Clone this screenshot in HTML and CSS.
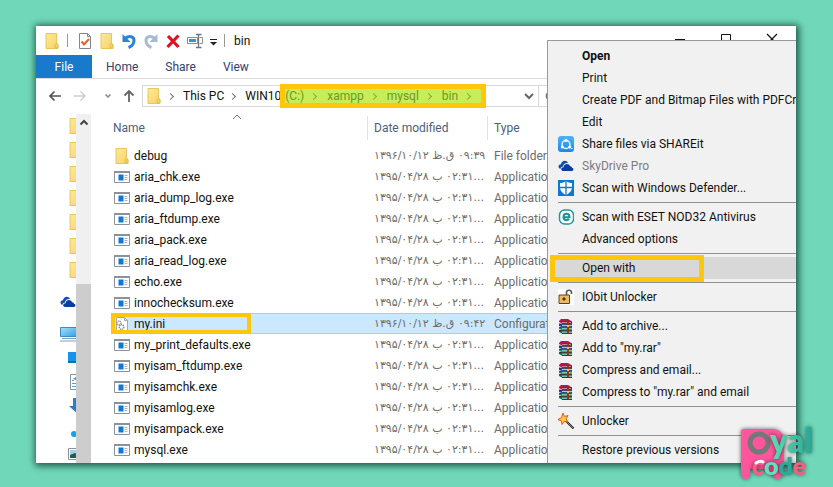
FILE: index.html
```
<!DOCTYPE html>
<html lang="en">
<head>
<meta charset="utf-8">
<title>bin</title>
<link rel="stylesheet" href="styles.css">
</head>
<body>
<svg class="defs" aria-hidden="true">
  <linearGradient id="fold" x1="0" y1="0" x2="1" y2="1"><stop offset="0" stop-color="#ffe99a"/><stop offset="1" stop-color="#f5d266"/></linearGradient>
  <linearGradient id="screen" x1="0" y1="0" x2="1" y2="1"><stop offset="0" stop-color="#a6e3fb"/><stop offset="1" stop-color="#2f9be6"/></linearGradient>
  <linearGradient id="share" x1="0" y1="0" x2="0" y2="1"><stop offset="0" stop-color="#4db4fb"/><stop offset="1" stop-color="#1b86f0"/></linearGradient>
  <symbol id="folder" viewBox="0 0 16 16"><path d="M2 .5h10.500v10l1.500 1v4H2z" fill="url(#fold)" stroke="#e6c24e" stroke-width=".9"/><path d="M11 15V11.500l1.500-1 1.500 1V15z" fill="#f3cf62" stroke="#dcb645" stroke-width=".6"/></symbol>
  <symbol id="exe" viewBox="0 0 16 16"><path d="M.5 2.500h15v11H.5z" fill="#fff" stroke="#8b9299"/><path d="M0 2h16v2H0z" fill="#8b9299"/><path d="M4.500 5.500h5v6h-5z" fill="#0f78d4"/><path d="M10.500 6.500h3M10.500 8.500h3M10.500 10.500h3" stroke="#a9b4be"/></symbol>
  <symbol id="ini" viewBox="0 0 16 16"><path d="M2.500 1.500h8l3 3v10h-11z" fill="#fff" stroke="#a7a7a7"/><path d="M10.500 1.500v3h3" fill="none" stroke="#a7a7a7"/><circle cx="5" cy="7" r="2" fill="none" stroke="#9b9b9b" stroke-width="1.500" stroke-dasharray="1.200 .6"/><circle cx="7.500" cy="11" r="2.300" fill="none" stroke="#8b8b8b" stroke-width="1.500" stroke-dasharray="1.200 .6"/></symbol>
  <symbol id="cloud" viewBox="0 0 16 16"><path d="M1.500 10.500C-.5 9 .7 6 3 6.200 3.500 2.500 8.500 1.500 10 5 6.500 4.500 5 7 5 8.500 3.500 8.500 2.500 9.500 2.500 11z" fill="#0f4fae"/><path d="M5 13C2.500 13 2.700 9.300 5.500 9.300 5.800 5.500 11 4.800 12 8.200c1.800-.2 2 1.300 1.900 1.600C16 10 15.800 13 14 13z" fill="#0a3ea0"/></symbol>
  <symbol id="books" viewBox="0 0 16 16"><path d="M1 3l2-2h7l4 2.500v2H4L1 4z" fill="#b01852"/><path d="M4 3.700h10v2H4z" fill="#6d1034"/><path d="M4 4.600h9" stroke="#e9b8c8" stroke-width=".8"/><path d="M1 5.500l3 1h10v2.500H4L1 8z" fill="#2b3fae"/><path d="M4 7.600h10" stroke="#b9d3f5"/><path d="M1 9l3 1h10v2H4l-3-1z" fill="#138a5f"/><path d="M4 10.800h10" stroke="#a7e1c7"/><path d="M1 12l3 1h10v2.500H4L1 14z" fill="#0b6c52"/><path d="M4 14.200h10" stroke="#a7e1df"/><path d="M1.500 6.200h12.500M1.500 9.400h12.500M1.500 12.500h12.500M4 15.600h10" stroke="#111" stroke-width=".8"/><path d="M8.500 1.500L11 3.500v12H9V4z" fill="#8c3a18"/><path d="M9 7h2v2H9z" fill="#f0c23c"/></symbol>
</svg>

<main class="window">
  <header class="titlebar">
    <button class="tool" aria-label="Window menu"><svg viewBox="0 0 16 16"><use href="#folder"/></svg></button>
    <i class="bar"></i>
    <button class="tool" aria-label="Properties"><svg viewBox="0 0 16 16"><path d="M2.500.5h8l3 3v12h-11z" fill="#fff" stroke="#858585"/><path d="M10.500.5v3h3" fill="none" stroke="#858585"/><path d="M4.500 8.500l2.500 3 5-5.500" fill="none" stroke="#e8602c" stroke-width="2"/></svg></button>
    <button class="tool" aria-label="New folder"><svg viewBox="0 0 16 16"><use href="#folder"/></svg></button>
    <button class="tool" aria-label="Undo"><svg viewBox="0 0 16 16"><path d="M4 5.500C9 1.500 14 4 12.800 9c-.5 2.500-2.500 4.500-5.300 5.500" fill="none" stroke="#2b84d3" stroke-width="3"/><path d="M1.500 1v8h8z" fill="#2b84d3"/></svg></button>
    <button class="tool" aria-label="Redo"><svg viewBox="0 0 16 16"><path d="M12 5.500C7 1.500 2 4 3.200 9c.5 2.500 2.500 4.500 5.300 5.500" fill="none" stroke="#a9b9d3" stroke-width="3"/><path d="M14.500 1v8h-8z" fill="#a9b9d3"/></svg></button>
    <button class="tool" aria-label="Delete"><svg viewBox="0 0 16 16"><path d="M3 3l10.500 11M13.500 2.500L2.500 14" stroke="#dc1420" stroke-width="3.200"/></svg></button>
    <button class="tool" aria-label="Rename"><svg viewBox="0 0 16 16"><path d="M.5 4.500h10v6H.5zM12.500 4.500h3v6h-3" fill="#fff" stroke="#85909b"/><path d="M2 6h7v3H2z" fill="#2f94e4"/><path d="M9 1.500h5.500M11.500 1.500v13M9 14.500h5.500" stroke="#6e7780" stroke-width="1.300"/></svg></button>
    <button class="tool slim" aria-label="Customize toolbar"><svg viewBox="0 0 8 16"><path d="M1 6.500h7" stroke="#222"/><path d="M1 9h7L4.500 12.500z" fill="#222"/></svg></button>
    <i class="bar"></i>
    <h1>bin</h1>
    <div class="controls">
      <button aria-label="Minimize"><svg viewBox="0 0 12 12"><path d="M1 6.500h10" stroke="#111"/></svg></button>
      <button aria-label="Maximize"><svg viewBox="0 0 12 12"><path d="M1.500 1.500h9v9h-9z" fill="none" stroke="#111"/></svg></button>
      <button aria-label="Close"><svg viewBox="0 0 12 12"><path d="M1 1l10 10M11 1L1 11" stroke="#111" stroke-width="1.200"/></svg></button>
    </div>
  </header>

  <nav class="tabs"><button class="file">File</button><button>Home</button><button>Share</button><button>View</button></nav>

  <div class="address">
    <button class="tool" aria-label="Back"><svg viewBox="0 0 16 16"><path d="M14 8H3M7.500 3.500L3 8l4.500 4.500" fill="none" stroke="#555" stroke-width="1.700"/></svg></button>
    <button class="tool" aria-label="Forward"><svg viewBox="0 0 16 16"><path d="M2 8h11M8.500 3.500L13 8l-4.500 4.500" fill="none" stroke="#ccc" stroke-width="1.400"/></svg></button>
    <button class="tool slim" aria-label="Recent locations"><svg viewBox="0 0 8 16"><path d="M1.500 6.500L4 9l2.500-2.500" fill="none" stroke="#888" stroke-width="1.500"/></svg></button>
    <button class="tool" aria-label="Up"><svg viewBox="0 0 16 16"><path d="M8 14V3M3.500 7.500L8 3l4.500 4.500" fill="none" stroke="#666" stroke-width="1.800"/></svg></button>
    <div class="path">
      <svg class="icon" viewBox="0 0 16 16"><use href="#folder"/></svg>
      <i class="chev"></i><button>This PC</button>
      <i class="chev"></i><button>WIN10</button>
      <div class="marked">
        <button>(C:)</button><i class="chev"></i><button>xampp</button><i class="chev"></i><button>mysql</button><i class="chev"></i><button>bin</button><i class="chev"></i>
      </div>
      <button class="drop" aria-label="Previous locations"><svg viewBox="0 0 12 12"><path d="M2 4l4 4 4-4" fill="none" stroke="#666" stroke-width="2"/></svg></button>
      <button class="reload" aria-label="Refresh"><svg viewBox="0 0 12 12"><path d="M9.500 3.500A4 4 0 1 0 10 7.500M10 1v3.500H6.500" fill="none" stroke="#777" stroke-width="1.500"/></svg></button>
    </div>
  </div>

  <div class="body">
    <ul class="tree">
      <li><svg viewBox="0 0 16 16"><use href="#folder"/></svg></li>
      <li><svg viewBox="0 0 16 16"><use href="#folder"/></svg></li>
      <li><svg viewBox="0 0 16 16"><use href="#folder"/></svg></li>
      <li><svg viewBox="0 0 16 16"><use href="#folder"/></svg></li>
      <li><svg viewBox="0 0 16 16"><use href="#folder"/></svg></li>
      <li><svg viewBox="0 0 16 16"><use href="#folder"/></svg></li>
      <li><svg viewBox="0 0 16 16"><use href="#folder"/></svg></li>
      <li class="root"><svg viewBox="0 0 16 16"><use href="#cloud"/></svg></li>
      <li class="root"><svg viewBox="0 0 16 16"><path d="M.5 1.500h17v9H.5z" fill="url(#screen)" stroke="#3b8cc4"/><path d="M2 12.500h14M0 15h16" stroke="#7f9db5"/></svg></li>
      <li><svg viewBox="0 0 16 16"><path d="M0 2h16v11H0z" fill="#1793e8"/><path d="M0 11h16v2H0z" fill="#0c6fbb"/></svg></li>
      <li><svg viewBox="0 0 16 16"><path d="M2.500.5h12v15h-12z" fill="#fff" stroke="#8d959c"/><path d="M4 6.500h2M4 9.500h8M4 12.500h8" stroke="#5b9fd0"/><path d="M5 5l3-2v3z" fill="#2f94e4"/></svg></li>
      <li><svg viewBox="0 0 16 16"><path d="M5 0h5v8h4l-6.500 6L1 8h4z" fill="#2880c8"/></svg></li>
      <li><svg viewBox="0 0 16 16"><circle cx="6" cy="12" r="3" fill="#12a3ea"/><path d="M10 12V1l6 3" fill="none" stroke="#12a3ea" stroke-width="2"/></svg></li>
      <li><svg viewBox="0 0 16 16"><path d="M.5 2.500h15v11H.5z" fill="#fff" stroke="#8d959c"/><path d="M2 4h12v8H2z" fill="#9fd1ee"/><path d="M2 12V9l5-2 7 3v2z" fill="#255a4a"/></svg></li>
    </ul>
    <div class="scroll"><button aria-label="Scroll up"><svg viewBox="0 0 12 12"><path d="M2.500 7.500L6 4l3.500 3.500" fill="none" stroke="#444" stroke-width="2"/></svg></button><i></i></div>

    <table class="files">
      <thead><tr><th class="name">Name<svg class="sort" viewBox="0 0 10 6"><path d="M1 5l4-4 4 4" fill="none" stroke="#777"/></svg></th><th class="date">Date modified</th><th>Type</th></tr></thead>
      <tbody>
        <tr><td><svg viewBox="0 0 16 16"><use href="#folder"/></svg>debug</td><td class="when"><bdi>۱۳۹۶/۱۰/۱۲</bdi> <bdi>ق.ظ</bdi> <bdi>۰۹:۳۹</bdi></td><td>File folder</td></tr>
        <tr><td><svg viewBox="0 0 16 16"><use href="#exe"/></svg>aria_chk.exe</td><td class="when"><bdi>۱۳۹۵/۰۴/۲۸</bdi> <bdi>ب</bdi> <bdi>۰۲:۳۱</bdi>...</td><td>Application</td></tr>
        <tr><td><svg viewBox="0 0 16 16"><use href="#exe"/></svg>aria_dump_log.exe</td><td class="when"><bdi>۱۳۹۵/۰۴/۲۸</bdi> <bdi>ب</bdi> <bdi>۰۲:۳۱</bdi>...</td><td>Application</td></tr>
        <tr><td><svg viewBox="0 0 16 16"><use href="#exe"/></svg>aria_ftdump.exe</td><td class="when"><bdi>۱۳۹۵/۰۴/۲۸</bdi> <bdi>ب</bdi> <bdi>۰۲:۳۱</bdi>...</td><td>Application</td></tr>
        <tr><td><svg viewBox="0 0 16 16"><use href="#exe"/></svg>aria_pack.exe</td><td class="when"><bdi>۱۳۹۵/۰۴/۲۸</bdi> <bdi>ب</bdi> <bdi>۰۲:۳۱</bdi>...</td><td>Application</td></tr>
        <tr><td><svg viewBox="0 0 16 16"><use href="#exe"/></svg>aria_read_log.exe</td><td class="when"><bdi>۱۳۹۵/۰۴/۲۸</bdi> <bdi>ب</bdi> <bdi>۰۲:۳۱</bdi>...</td><td>Application</td></tr>
        <tr><td><svg viewBox="0 0 16 16"><use href="#exe"/></svg>echo.exe</td><td class="when"><bdi>۱۳۹۵/۰۴/۲۸</bdi> <bdi>ب</bdi> <bdi>۰۲:۳۱</bdi>...</td><td>Application</td></tr>
        <tr><td><svg viewBox="0 0 16 16"><use href="#exe"/></svg>innochecksum.exe</td><td class="when"><bdi>۱۳۹۵/۰۴/۲۸</bdi> <bdi>ب</bdi> <bdi>۰۲:۳۱</bdi>...</td><td>Application</td></tr>
        <tr class="selected"><td><svg viewBox="0 0 16 16"><use href="#ini"/></svg>my.ini</td><td class="when"><bdi>۱۳۹۶/۱۰/۱۲</bdi> <bdi>ق.ظ</bdi> <bdi>۰۹:۴۲</bdi></td><td>Configuration</td></tr>
        <tr><td><svg viewBox="0 0 16 16"><use href="#exe"/></svg>my_print_defaults.exe</td><td class="when"><bdi>۱۳۹۵/۰۴/۲۸</bdi> <bdi>ب</bdi> <bdi>۰۲:۳۱</bdi>...</td><td>Application</td></tr>
        <tr><td><svg viewBox="0 0 16 16"><use href="#exe"/></svg>myisam_ftdump.exe</td><td class="when"><bdi>۱۳۹۵/۰۴/۲۸</bdi> <bdi>ب</bdi> <bdi>۰۲:۳۱</bdi>...</td><td>Application</td></tr>
        <tr><td><svg viewBox="0 0 16 16"><use href="#exe"/></svg>myisamchk.exe</td><td class="when"><bdi>۱۳۹۵/۰۴/۲۸</bdi> <bdi>ب</bdi> <bdi>۰۲:۳۱</bdi>...</td><td>Application</td></tr>
        <tr><td><svg viewBox="0 0 16 16"><use href="#exe"/></svg>myisamlog.exe</td><td class="when"><bdi>۱۳۹۵/۰۴/۲۸</bdi> <bdi>ب</bdi> <bdi>۰۲:۳۱</bdi>...</td><td>Application</td></tr>
        <tr><td><svg viewBox="0 0 16 16"><use href="#exe"/></svg>myisampack.exe</td><td class="when"><bdi>۱۳۹۵/۰۴/۲۸</bdi> <bdi>ب</bdi> <bdi>۰۲:۳۱</bdi>...</td><td>Application</td></tr>
        <tr><td><svg viewBox="0 0 16 16"><use href="#exe"/></svg>mysql.exe</td><td class="when"><bdi>۱۳۹۵/۰۴/۲۸</bdi> <bdi>ب</bdi> <bdi>۰۲:۳۱</bdi>...</td><td>Application</td></tr>
      </tbody>
    </table>
  </div>

  <div class="menu" role="menu">
    <button role="menuitem"><b>Open</b></button>
    <button role="menuitem">Print</button>
    <button role="menuitem">Create PDF and Bitmap Files with PDFCre</button>
    <button role="menuitem">Edit</button>
    <button role="menuitem"><svg viewBox="0 0 16 16"><rect width="16" height="16" rx="3" fill="url(#share)"/><circle cx="8" cy="8.500" r="4" fill="none" stroke="#fff" stroke-width="1.300"/><circle cx="8" cy="4.200" r="1.500" fill="#fff"/><circle cx="4.300" cy="11" r="1.500" fill="#fff"/><circle cx="11.800" cy="11" r="1.500" fill="#fff"/><path d="M13 12.500h1.500" stroke="#fff"/></svg>Share files via SHAREit</button>
    <button role="menuitem" disabled><svg viewBox="0 0 16 16"><use href="#cloud"/></svg>SkyDrive Pro</button>
    <button role="menuitem"><svg viewBox="0 0 16 16"><path d="M0 0h16v16H0z" fill="#0a78d7"/><path d="M8 1c2 1.500 4 2 6 2v4c0 4-3 6.500-6 8-3-1.500-6-4-6-8V3c2 0 4-.5 6-2z" fill="#fff"/><path d="M8 1v14M2 7.500h12" stroke="#0a78d7" stroke-width="1.300"/></svg>Scan with Windows Defender...</button>
    <hr>
    <button role="menuitem"><svg viewBox="0 0 16 16"><rect x="1.500" y="1" width="14" height="14" rx="5" fill="#fff" stroke="#1d9a9c" stroke-width="1.500"/><path d="M5.500 8.200h6c0-4.500-6-4.500-6 0 0 3.500 4 3.500 5.500 1.800" fill="none" stroke="#1d9092" stroke-width="2"/></svg>Scan with ESET NOD32 Antivirus</button>
    <button role="menuitem">Advanced options</button>
    <hr>
    <button role="menuitem" class="hover">Open with</button>
    <hr>
    <button role="menuitem"><svg viewBox="0 0 16 16"><path d="M0 0h16v16H0z" fill="#fff"/><path d="M8.500 6V3.500c0-3 5-3 5 0V5" fill="none" stroke="#555" stroke-width="1.600"/><path d="M1 6h10.500v8.500H1z" fill="#eebb63" stroke="#5c4422"/><path d="M6 8l2 2-2 2-2-2z" fill="#4a3618"/></svg>IObit Unlocker</button>
    <hr>
    <button role="menuitem"><svg viewBox="0 0 16 16"><use href="#books"/></svg>Add to archive...</button>
    <button role="menuitem"><svg viewBox="0 0 16 16"><use href="#books"/></svg>Add to "my.rar"</button>
    <button role="menuitem"><svg viewBox="0 0 16 16"><use href="#books"/></svg>Compress and email...</button>
    <button role="menuitem"><svg viewBox="0 0 16 16"><use href="#books"/></svg>Compress to "my.rar" and email</button>
    <hr>
    <button role="menuitem"><svg viewBox="0 0 16 16"><path d="M7 7l8.500 8.500" stroke="#222" stroke-width="2"/><path d="M8 8l7 7" stroke="#bbb" stroke-width=".6"/><path d="M5 0l1.500 3.500L10 2.500 8 6l2 3-3.500-.5L4 11.500 3.500 8 0 6.500l3.500-2z" fill="#ffc93a" stroke="#d94c22" stroke-width=".9"/></svg>Unlocker</button>
    <hr>
    <button role="menuitem">Restore previous versions</button>
  </div>
</main>

<svg class="brand" viewBox="0 0 88 64" role="img" aria-label="Poyal code">
  <defs><linearGradient id="mint" x1="0" y1="0" x2="1" y2="0"><stop offset="0" stop-color="#5fe0b4"/><stop offset="1" stop-color="#26a796"/></linearGradient></defs>
  <g class="glow">
    <path d="M9 10q0-3 3-3h28q12 0 12 14v14q0 7-4 12l3 6q-4 7-9 2l-8-8H18v5q0 5-4 5t-5-5z" fill="#ff559c"/>
    <circle cx="27" cy="21" r="9" fill="none" stroke="#747877" stroke-width="5"/>
  </g>
  <text class="upper glow" x="38" y="31" fill="url(#mint)">yal</text>
  <text class="lower glow" x="20" y="53"><tspan fill="#fb5c86">c</tspan><tspan fill="#67dfbd">o</tspan><tspan fill="#2fa99b">d</tspan><tspan fill="#f25f80">e</tspan></text>
  <path d="M24 41q4-3 7-1" fill="none" stroke="#fff" stroke-width="3" stroke-linecap="round"/>
</svg>
</body>
</html>
```
FILE: styles.css
```
*, *::after { box-sizing: border-box; }
body {
  margin: 0;
  min-height: 100vh;
  padding: 26px 37px 24px 36px;
  display: flex;
  background: #70d8b9;
  color: #111;
  font: 12px/16px Roboto, "Noto Sans", sans-serif;
}
button { margin: 0; padding: 0; border: 0; background: none; font: inherit; color: inherit; }
svg { display: block; flex: none; }
.defs { position: absolute; width: 0; height: 0; }

.window {
  position: relative;
  flex: 1;
  min-width: 0;
  overflow: hidden;
  background: #fff;
  box-shadow: 1px 1px 7px 2px rgba(0, 45, 35, .75);
}

.titlebar { display: flex; align-items: center; height: 29px; padding-left: 8px; gap: 6px; }
.tool { width: 16px; height: 16px; }
.tool svg { width: 16px; height: 16px; }
.tool.slim, .tool.slim svg { width: 8px; }
.bar { width: 1px; height: 13px; margin: 0 3px 0 1px; background: #999; }
h1 { margin: 0; font: inherit; }
.controls { display: flex; gap: 34px; margin-left: auto; padding: 0 18px 4px 0; }
.controls svg { width: 12px; height: 12px; }

.tabs { display: flex; gap: 27px; height: 24px; border-bottom: 1px solid #dcdddf; color: #33406a; }
.tabs .file { width: 56px; margin-right: -13px; background: #1979ca; color: #fff; }

.address { display: flex; align-items: center; height: 34px; padding: 0 8px 0 11px; gap: 9px; }
.path { display: flex; align-items: center; flex: 1; height: 22px; margin-left: -4px; border: 1px solid #d9d9d9; padding-left: 3px; }
.address .slim { margin-left: 7px; }
.path .icon { width: 16px; height: 16px; }
.chev { flex: none; width: 5px; height: 5px; margin: 0 10px 0 6px; border: solid #777; border-width: 1px 1px 0 0; transform: rotate(45deg); }
.marked { display: flex; align-items: center; flex: none; height: 24px; width: 206px; margin-left: -1px; border: 5px solid #ffc60b; background: #c7ee58; color: #6f9431; }
.marked .chev { margin: 0 11px 0 7px; border-color: #8aa943; }
.drop { margin-left: 37px; }
.drop svg, .reload svg { width: 12px; height: 12px; }
.reload { height: 20px; margin-left: 3px; padding-left: 5px; border-left: 1px solid #d9d9d9; }

.body { display: flex; }
.tree { width: 40px; height: 350px; margin: 0; padding: 1px 0 0; overflow: hidden; list-style: none; }
.tree li { height: 24px; padding: 4px 0 4px 32px; }
.tree .root { margin: 8px 0 0; padding-left: 24px; }
.tree svg { width: 16px; height: 16px; }
.scroll { display: flex; flex-direction: column; width: 15px; margin-top: 1px; background: #f0f0f0; }
.scroll button { height: 18px; padding-left: 2px; }
.scroll svg { width: 12px; height: 12px; }
.scroll i { flex: 1; margin-top: 152px; background: #cdcdcd; }

.files { flex: 1; align-self: flex-start; margin-left: 20px; border-collapse: collapse; table-layout: fixed; color: #6d6d6d; }
.files th { position: relative; height: 32px; padding: 0 0 3px 7px; text-align: left; font-weight: 400; color: #4c607a; background: linear-gradient(#dfe3e8, #dfe3e8) left 3px / 1px 24px no-repeat; }
.files th.name { width: 256px; padding-left: 2px; background: none; }
.files th.date { width: 120px; }
.sort { position: absolute; left: 121px; top: 1px; width: 10px; height: 6px; }
.files td { height: 21px; padding: 0 0 0 7px; white-space: nowrap; overflow: hidden; }
.files td:first-child { display: flex; align-items: center; gap: 4px; padding-left: 3px; color: #111; }
.files td svg { width: 16px; height: 16px; }
.files .when { font-size: 11px; font-family: "DejaVu Sans", sans-serif; }
.selected td { background: #cce8ff; box-shadow: inset 0 1px #99d1ff, inset 0 -1px #99d1ff; }
.selected td:first-child { position: relative; }
.selected td:first-child::after { content: ""; position: absolute; inset: 0 auto 0 0; width: 140px; border: 4px solid #ffc60b; }

.menu {
  position: absolute;
  inset: 14px 0 0 511px;
  padding: 4px 0 0 2px;
  overflow: hidden;
  background: #f1f1f1;
  border: solid #999;
  border-width: 1px 0 0 1px;
}
.menu button { position: relative; display: block; width: 100%; height: 22px; padding-left: 32px; text-align: left; white-space: nowrap; color: #111; }
.menu button:disabled { color: #7d7d7d; }
.menu svg { position: absolute; left: 8px; top: 3px; width: 16px; height: 16px; }
.menu hr { height: 1px; margin: 3px 0 3px 8px; border: 0; background: #919191; }
.menu .hover { background: #d8d8d8; }
.menu .hover::after { content: ""; position: absolute; inset: -2px auto -3px 0; width: 154px; border: 5px solid #ffc60b; }

.brand { position: absolute; right: 13px; bottom: 1px; width: 88px; height: 64px; }
.glow { filter: drop-shadow(0 0 2px rgba(0, 0, 0, .6)); }
.upper { font: 800 33px Lato, sans-serif; }
.lower { font: 800 25px Lato, sans-serif; }
```
